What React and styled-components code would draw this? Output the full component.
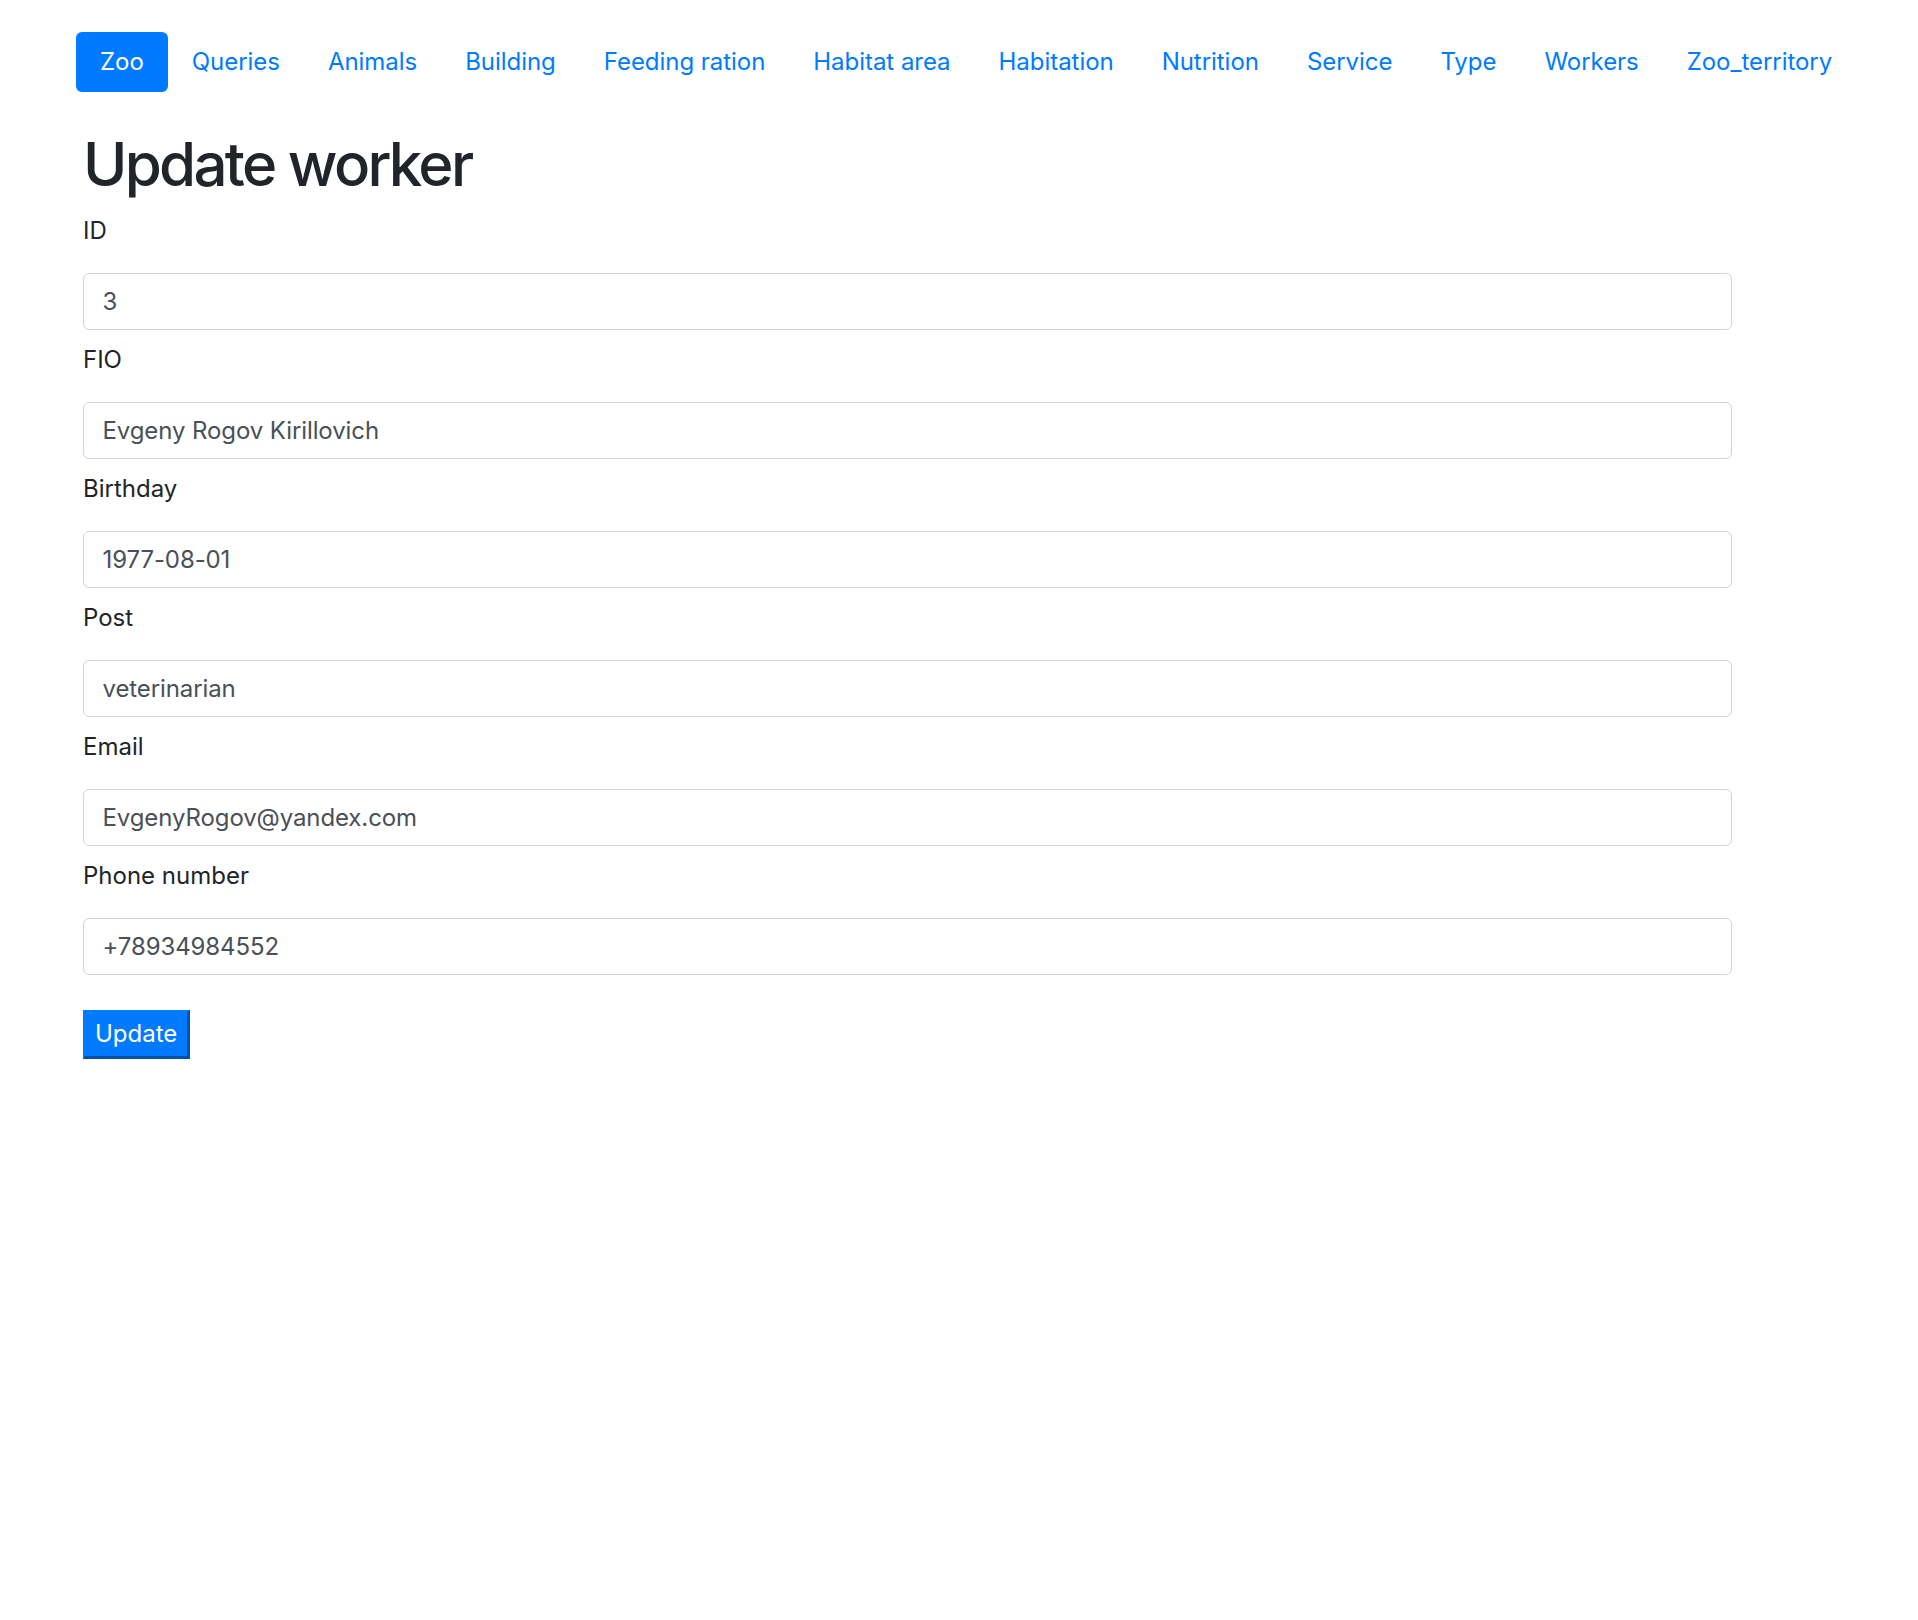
import React from 'react';
import styled, { createGlobalStyle } from 'styled-components';

const GlobalStyle = createGlobalStyle`
  body {
    margin: 0;
    background: #fff;
    font-family: Inter, "Liberation Sans", sans-serif;
    color: #212529;
  }
  * { box-sizing: border-box; }
`;

const Page = styled.div`
  min-height: 1620px;
  background: #fff;
`;

const NavBar = styled.nav`
  display: flex;
  align-items: center;
  padding: 32px 0 0 76px;
`;

const NavLink = styled.a`
  display: block;
  padding: 12px 24px;
  font-size: 24px;
  line-height: 36px;
  letter-spacing: -0.04px;
  color: ${(p) => (p.$active ? '#fff' : '#007bff')};
  background: ${(p) => (p.$active ? '#007bff' : 'transparent')};
  border-radius: 6px;
  text-decoration: none;
  cursor: pointer;
`;

const Main = styled.main`
  width: 1732px;
  padding-left: 83px;
`;

const Title = styled.h1`
  margin: 36px 0 13px;
  font-size: 60px;
  line-height: 72px;
  font-weight: 500;
  letter-spacing: -2.7px;
  color: #212529;
`;

const Field = styled.div`
  display: flex;
  flex-direction: column;
  margin-bottom: 12px;
`;

const Label = styled.label`
  font-size: 24px;
  line-height: 36px;
  margin-bottom: 24px;
  color: #212529;
`;

const Input = styled.input`
  height: 57px;
  width: 100%;
  padding: 9px 18px 9px 18.5px;
  font-family: inherit;
  font-size: 24px;
  line-height: 36px;
  letter-spacing: -0.1px;
  color: #495057;
  background: #fff;
  border: 1.5px solid #ced4da;
  border-radius: 6px;
  outline: none;
`;

const Button = styled.button`
  margin-top: 23px;
  padding: 8px 10px;
  font-family: inherit;
  font-size: 24px;
  line-height: 28px;
  color: #fff;
  background: #007bff;
  border: 3px solid;
  border-color: #007bff #0052a6 #0052a6 #007bff;
  border-width: 2px 3px 3px 2px;
  cursor: pointer;
`;

const links = [
  'Queries', 'Animals', 'Building', 'Feeding ration', 'Habitat area',
  'Habitation', 'Nutrition', 'Service', 'Type', 'Workers', 'Zoo_territory',
];

const fields = [
  ['ID', '3'],
  ['FIO', 'Evgeny Rogov Kirillovich'],
  ['Birthday', '1977-08-01'],
  ['Post', 'veterinarian'],
  ['Email', 'EvgenyRogov@yandex.com'],
  ['Phone number', '+78934984552'],
];

const App = () => {
  return (
    <>
      <GlobalStyle />
      <Page>
        <NavBar>
          <NavLink $active>Zoo</NavLink>
          {links.map((l) => (
            <NavLink key={l}>{l}</NavLink>
          ))}
        </NavBar>
        <Main>
          <Title>Update worker</Title>
          <form onSubmit={(e) => e.preventDefault()}>
            {fields.map(([label, value]) => (
              <Field key={label}>
                <Label>{label}</Label>
                <Input defaultValue={value} />
              </Field>
            ))}
            <Button type="submit">Update</Button>
          </form>
        </Main>
      </Page>
    </>
  );
};

export default App;
